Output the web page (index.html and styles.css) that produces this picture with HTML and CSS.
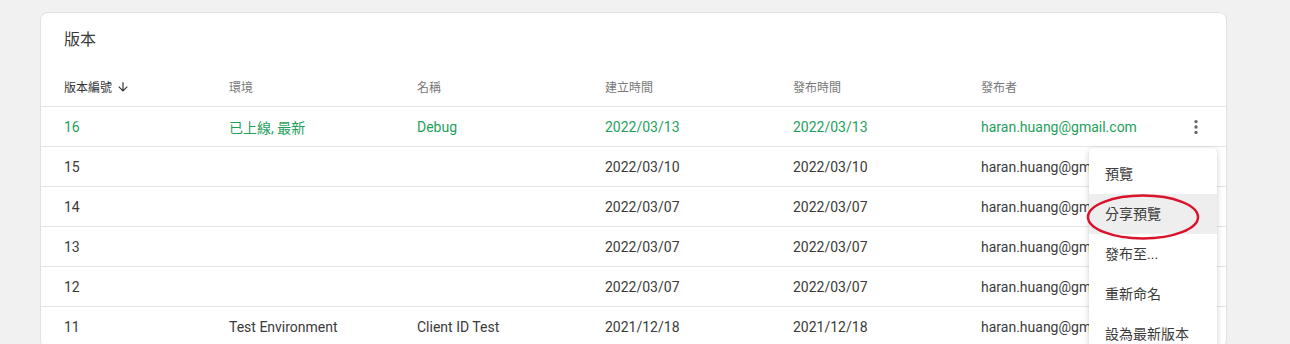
FILE: index.html
```html
<!DOCTYPE html>
<html lang="zh-Hant">
<head>
    <meta charset="UTF-8">
    <meta name="viewport" content="width=device-width, initial-scale=1.0">
    <title>版本</title>
    <link rel="stylesheet" href="styles.css">
</head>
<body>
    <div class="card">
        <div class="card-title">版本</div>
        <div class="table">
            <div class="row head">
                <div class="cell sorted">版本編號
                    <svg class="sort-icon" viewBox="0 0 24 24" width="14" height="14"><path d="M20 12l-1.41-1.41L13 16.17V4h-2v12.17l-5.58-5.59L4 12l8 8 8-8z"/></svg>
                </div>
                <div class="cell">環境</div>
                <div class="cell">名稱</div>
                <div class="cell">建立時間</div>
                <div class="cell">發布時間</div>
                <div class="cell">發布者</div>
                <div class="cell"></div>
            </div>
            <div class="row live">
                <div class="cell">16</div>
                <div class="cell">已上線, 最新</div>
                <div class="cell">Debug</div>
                <div class="cell">2022/03/13</div>
                <div class="cell">2022/03/13</div>
                <div class="cell">haran.huang@gmail.com</div>
                <div class="cell kebab">
                    <svg viewBox="0 0 24 24" width="20" height="20"><circle cx="12" cy="5.5" r="2"/><circle cx="12" cy="12" r="2"/><circle cx="12" cy="18.5" r="2"/></svg>
                </div>
            </div>
            <div class="row">
                <div class="cell">15</div>
                <div class="cell"></div>
                <div class="cell"></div>
                <div class="cell">2022/03/10</div>
                <div class="cell">2022/03/10</div>
                <div class="cell">haran.huang@gmail.com</div>
                <div class="cell"></div>
            </div>
            <div class="row">
                <div class="cell">14</div>
                <div class="cell"></div>
                <div class="cell"></div>
                <div class="cell">2022/03/07</div>
                <div class="cell">2022/03/07</div>
                <div class="cell">haran.huang@gmail.com</div>
                <div class="cell"></div>
            </div>
            <div class="row">
                <div class="cell">13</div>
                <div class="cell"></div>
                <div class="cell"></div>
                <div class="cell">2022/03/07</div>
                <div class="cell">2022/03/07</div>
                <div class="cell">haran.huang@gmail.com</div>
                <div class="cell"></div>
            </div>
            <div class="row">
                <div class="cell">12</div>
                <div class="cell"></div>
                <div class="cell"></div>
                <div class="cell">2022/03/07</div>
                <div class="cell">2022/03/07</div>
                <div class="cell">haran.huang@gmail.com</div>
                <div class="cell"></div>
            </div>
            <div class="row">
                <div class="cell">11</div>
                <div class="cell">Test Environment</div>
                <div class="cell">Client ID Test</div>
                <div class="cell">2021/12/18</div>
                <div class="cell">2021/12/18</div>
                <div class="cell">haran.huang@gmail.com</div>
                <div class="cell"></div>
            </div>
        </div>
    </div>

    <div class="menu">
        <div class="menu-item">預覽</div>
        <div class="menu-item active">分享預覽</div>
        <div class="menu-item">發布至...</div>
        <div class="menu-item">重新命名</div>
        <div class="menu-item">設為最新版本</div>
    </div>

    <svg class="mark" viewBox="0 0 114 48" width="114" height="48">
        <ellipse cx="57" cy="24" rx="55" ry="21.5" fill="none" stroke="#d9132b" stroke-width="2.5"/>
    </svg>
</body>
</html>
```

FILE: styles.css
```css
html, body {
    margin: 0;
    padding: 0;
    height: 344px;
    overflow: hidden;
}

body {
    background-color: #f1f1f1;
    font-family: Roboto, "Noto Sans CJK TC", sans-serif;
    color: #3a3a3a;
    padding: 12px 63px 0 40px;
    position: relative;
}

.card {
    background-color: #fff;
    border: 1px solid #e2e2e2;
    border-radius: 8px;
    width: 1185px;
}

.card-title {
    font-size: 16px;
    line-height: 20px;
    padding: 17px 23px 17px;
    color: #3a3a3a;
}

.row {
    display: grid;
    grid-template-columns: 165px 188px 188px 188px 188px 1fr 60px;
    padding-left: 23px;
    height: 39px;
    align-items: center;
    border-bottom: 1px solid #e4e4e4;
    font-size: 14px;
}

.row.head {
    font-size: 12px;
    color: #777;
}

.row.head .sorted {
    color: #333;
    display: flex;
    align-items: center;
    gap: 4px;
}

.sort-icon {
    fill: #333;
}

.row.live {
    color: #1e9f5c;
}

.kebab {
    display: flex;
    justify-content: center;
    fill: #666;
}

.menu {
    position: absolute;
    left: 1089px;
    top: 148px;
    width: 128px;
    background-color: #fff;
    border-radius: 4px;
    padding-top: 6px;
    box-shadow: 0 2px 6px rgba(0, 0, 0, 0.18), 0 0 1px rgba(0, 0, 0, 0.12);
}

.menu-item {
    height: 40px;
    line-height: 40px;
    padding-left: 16px;
    font-size: 14px;
    color: #3a3a3a;
}

.menu-item.active {
    background-color: #eee;
}

.mark {
    position: absolute;
    left: 1086px;
    top: 193px;
}
```
